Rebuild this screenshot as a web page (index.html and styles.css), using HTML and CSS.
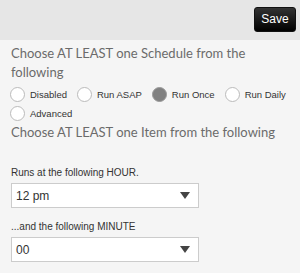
FILE: index.html
```html
<!DOCTYPE html>
<html lang="en">
<head>
    <meta charset="UTF-8">
    <title>Schedule</title>
    <link rel="stylesheet" href="styles.css">
</head>
<body>
<div class="top-bar">
    <div class="btn-save">Save</div>
</div>
<div class="content">
    <div class="section-title">Choose AT LEAST one Schedule from the following</div>
    <div class="radio-list">
        <label class="radio-item"><span class="radio"></span>Disabled</label>
        <label class="radio-item"><span class="radio"></span>Run ASAP</label>
        <label class="radio-item"><span class="radio checked"></span>Run Once</label>
        <label class="radio-item"><span class="radio"></span>Run Daily</label>
        <label class="radio-item"><span class="radio"></span>Advanced</label>
    </div>
    <div class="section-title single">Choose AT LEAST one Item from the following</div>
    <div class="field">
        <div class="field-label">Runs at the following HOUR.</div>
        <div class="select-box">
            <span>12 pm</span>
            <span class="arrow"></span>
        </div>
    </div>
    <div class="field">
        <div class="field-label">...and the following MINUTE</div>
        <div class="select-box">
            <span>00</span>
            <span class="arrow"></span>
        </div>
    </div>
</div>
</body>
</html>
```
FILE: styles.css
```css
body{
    margin: 0;
    padding: 0;
    background-color: #f5f5f5;
    font-family: "Liberation Sans", Arial, sans-serif;
}
.top-bar{
    display: flex;
    justify-content: flex-end;
    align-items: flex-start;
    height: 40px;
    background-color: #e6e6e6;
    padding: 7px 4px 0 0;
    box-sizing: border-box;
}
.btn-save{
    width: 42px;
    height: 25px;
    line-height: 23px;
    text-align: center;
    font-size: 12px;
    color: #fff;
    border-radius: 3px;
    background: linear-gradient(#333, #000);
    border: 1px solid #111;
    box-sizing: border-box;
}
.content{
    padding: 4px 6px 0 11px;
}
.section-title{
    font-family: Lato, sans-serif;
    font-size: 13px;
    line-height: 19px;
    color: #6b6b6b;
}
.section-title.single{
    margin-top: 2px;
}
.radio-list{
    display: flex;
    flex-wrap: wrap;
    margin: 5px 0 0 -1px;
    row-gap: 4px;
    column-gap: 10px;
}
.radio-item{
    display: flex;
    align-items: center;
    font-size: 9.5px;
    color: #333;
}
.radio{
    width: 15px;
    height: 15px;
    border: 1px solid #bbb;
    border-radius: 50%;
    background-color: #fff;
    margin-right: 5px;
    box-sizing: border-box;
}
.radio.checked{
    background-color: #808080;
    border-color: #999;
}
.field{
    margin-top: 25px;
}
.field + .field{
    margin-top: 13px;
}
.field-label{
    font-size: 10px;
    line-height: 12px;
    color: #333;
    margin-bottom: 4px;
}
.select-box{
    display: flex;
    justify-content: space-between;
    align-items: center;
    width: 188px;
    height: 25px;
    border: 1px solid #ccc;
    background-color: #fff;
    box-sizing: border-box;
    padding: 0 8px 0 4px;
    font-size: 12px;
    color: #333;
}
.arrow{
    width: 0;
    height: 0;
    border-left: 5px solid transparent;
    border-right: 5px solid transparent;
    border-top: 7px solid #444;
}
```
